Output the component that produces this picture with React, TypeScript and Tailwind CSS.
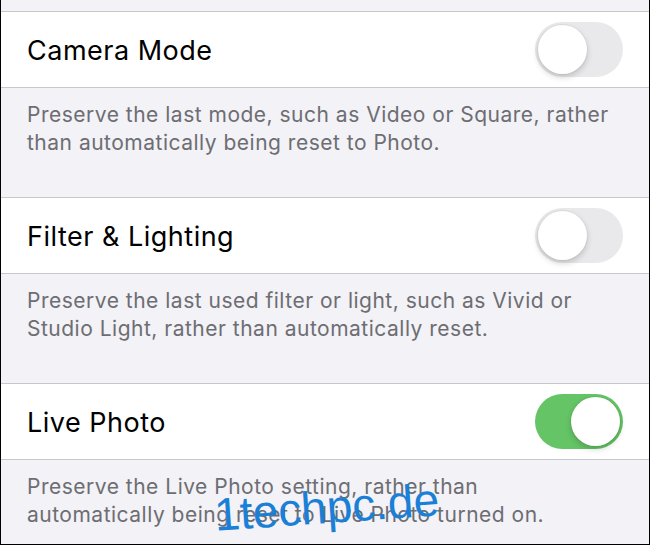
import React from "react";

function Toggle({ on }: { on: boolean }) {
  return (
    <div
      className={
        "relative h-[55px] w-[88px] shrink-0 rounded-full " +
        (on ? "bg-[#65c466]" : "bg-[#e9e9eb]")
      }
    >
      <div
        className={
          "absolute top-[3px] h-[49px] w-[49px] rounded-full bg-white shadow-[0_3px_6px_rgba(0,0,0,0.18),0_0_0_1px_rgba(0,0,0,0.04)] " +
          (on ? "right-[3px]" : "left-[3px]")
        }
      />
    </div>
  );
}

function Row({ title, on }: { title: string; on: boolean }) {
  return (
    <div className="flex h-[77px] items-center justify-between border-y border-[#c8c7cc] bg-white pl-[26px] pr-[26px]">
      <span className="mt-[3px] text-[27px] tracking-[0.5px] text-black">{title}</span>
      <Toggle on={on} />
    </div>
  );
}

function Footer({ lines, pb }: { lines: string[]; pb: string }) {
  return (
    <div className={"pl-[26px] pr-[20px] pt-[13px] text-[21px] leading-[28px] tracking-[0.5px] text-[#6d6d72] " + pb}>
      {lines.map((l, i) => (
        <div key={i} className="whitespace-nowrap">
          {l}
        </div>
      ))}
    </div>
  );
}

export default function App() {
  return (
    <div
      className="relative h-[545px] w-[650px] overflow-hidden border-x border-b border-black bg-[#f2f2f7]"
      style={{ fontFamily: "Inter, 'Noto Sans', Arial, sans-serif" }}
    >
      <div className="h-[11px]" />
      <Row title="Camera Mode" on={false} />
      <Footer
        lines={[
          "Preserve the last mode, such as Video or Square, rather",
          "than automatically being reset to Photo.",
        ]}
        pb="pb-[40px]"
      />
      <Row title="Filter & Lighting" on={false} />
      <Footer
        lines={[
          "Preserve the last used filter or light, such as Vivid or",
          "Studio Light, rather than automatically reset.",
        ]}
        pb="pb-[40px]"
      />
      <Row title="Live Photo" on={true} />
      <Footer
        lines={[
          "Preserve the Live Photo setting, rather than",
          "automatically being reset to Live Photo turned on.",
        ]}
        pb="pb-0"
      />
      <div
        className="pointer-events-none absolute left-[213px] top-[484px] -rotate-[4deg] text-[46px] leading-none text-[#1a7fd6]"
        style={{ fontFamily: "'Liberation Sans', Arial, sans-serif" }}
      >
        1techpc.de
      </div>
    </div>
  );
}
